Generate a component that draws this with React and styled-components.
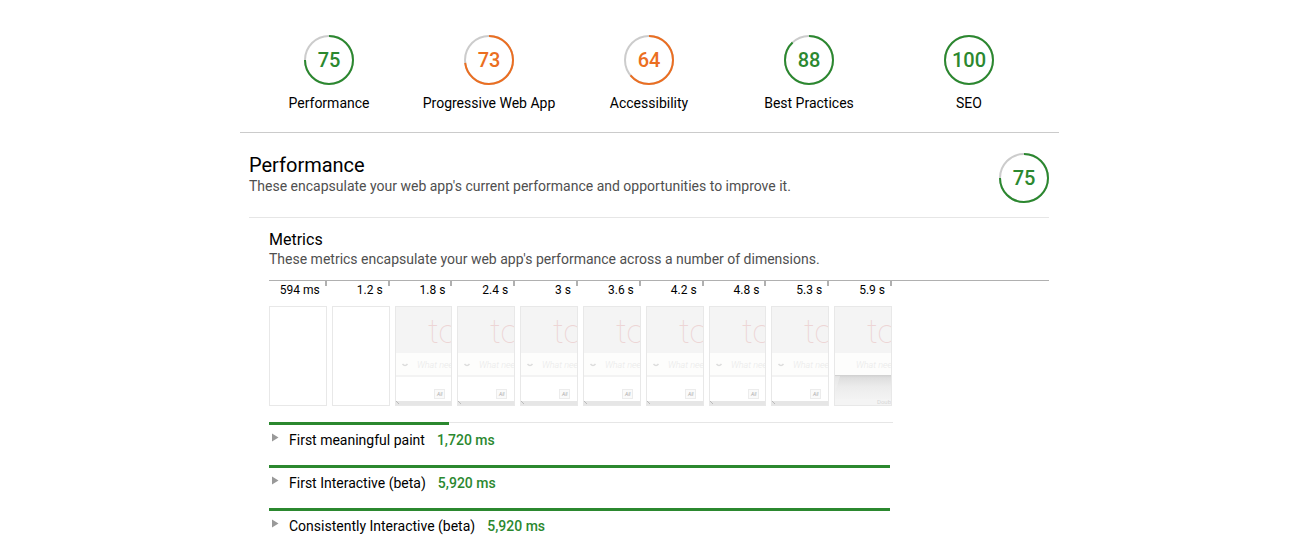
import React from "react";
import styled, { createGlobalStyle } from "styled-components";

const GREEN = "#2b882f";
const ORANGE = "#eb6e21";

const GlobalStyle = createGlobalStyle`
  body {
    margin: 0;
    background: #fff;
    color: #000;
    font-family: Roboto, "Liberation Sans", sans-serif;
    font-size: 14px;
    line-height: 18px;
  }
`;

const Report = styled.main`
  max-width: 819px;
  margin: 0 auto;
  padding-right: 3px;
`;

const Scores = styled.nav`
  display: grid;
  grid-template-columns: repeat(5, 1fr);
  padding: 35px 10px 20px 9px;
  border-bottom: 1px solid #cbcbcb;
`;

const ScoreLink = styled.a`
  display: flex;
  flex-direction: column;
  align-items: center;
  gap: 9px;
  color: inherit;
  text-decoration: none;
`;

const GaugeBox = styled.span`
  display: grid;
  flex: none;
  width: 50px;
  height: 50px;
  color: ${(p) => p.$color};
  font-size: 20px;
  font-weight: 500;
  line-height: 50px;
  text-align: center;

  > * {
    grid-area: 1 / 1;
  }
`;

const Category = styled.section`
  padding: 20px 10px 0 9px;
`;

const CategoryHeader = styled.header`
  display: flex;
  justify-content: space-between;
  padding-bottom: 14px;
  border-bottom: 1px solid #e6e6e6;
`;

const CategoryTitle = styled.h1`
  margin: 0;
  font-size: 20px;
  font-weight: 400;
  line-height: 24px;
`;

const Description = styled.p`
  margin: 0;
  color: #4f4f4f;
`;

const Metrics = styled.section`
  padding: 12px 0 0 20px;
`;

const MetricsTitle = styled.h2`
  margin: 0;
  font-size: 16px;
  font-weight: 400;
  line-height: 20px;
`;

const Filmstrip = styled.div`
  margin-top: 12px;
  border-top: 1px solid #b0b0b0;
`;

const Frames = styled.ol`
  display: grid;
  grid-template-columns: repeat(10, 1fr);
  column-gap: 5px;
  max-width: 623px;
  margin: 0;
  padding: 0;
  list-style: none;
`;

const Frame = styled.li`
  display: flex;
  flex-direction: column;
  gap: 7px;
  min-width: 0;
`;

const FrameTime = styled.span`
  display: flex;
  justify-content: flex-end;
  gap: 5px;
  font-size: 12px;
  line-height: 18px;
  white-space: nowrap;

  &::after {
    content: "";
    width: 2px;
    height: 5px;
    background: #b0b0b0;
  }
`;

const Thumb = styled.svg`
  display: block;
  box-sizing: border-box;
  width: 100%;
  height: 100px;
  border: 1px solid #e8e8e8;
`;

const MetricList = styled.div`
  display: flex;
  flex-direction: column;
  gap: 15px;
  max-width: 624px;
  margin-top: 16px;
`;

const Metric = styled.details`
  border-top: 1px solid ${(p) => (p.$full ? "transparent" : "#e6e6e6")};
`;

const Bar = styled.span`
  display: block;
  max-width: 621px;
  height: 3px;
  margin-top: -1px;
`;

const BarFill = styled.span`
  display: block;
  height: 3px;
  background: ${GREEN};
`;

const Summary = styled.summary`
  display: block;
  cursor: pointer;
`;

const MetricLine = styled.span`
  display: flex;
  padding: 6px 0 1px 3px;
`;

const Arrow = styled.svg`
  flex: none;
  width: 7px;
  height: 9px;
  margin: 2px 10px 0 0;
`;

const MetricValue = styled.span`
  margin-left: 12px;
  color: ${GREEN};
  font-weight: 500;
`;

const scores = [
  ["Performance", 75, GREEN],
  ["Progressive Web App", 73, ORANGE],
  ["Accessibility", 64, ORANGE],
  ["Best Practices", 88, GREEN],
  ["SEO", 100, GREEN],
];

const frames = [
  ["594 ms", "blank"],
  ["1.2 s", "blank"],
  ["1.8 s", "list"],
  ["2.4 s", "list"],
  ["3 s", "list"],
  ["3.6 s", "list"],
  ["4.2 s", "list"],
  ["4.8 s", "list"],
  ["5.3 s", "list"],
  ["5.9 s", "empty"],
];

const TOTAL = 5920;
const metrics = [
  ["First meaningful paint", 1720],
  ["First Interactive (beta)", 5920],
  ["Consistently Interactive (beta)", 5920],
];

function Gauge({ value, color }) {
  return (
    <GaugeBox $color={color}>
      <svg width="50" height="50" viewBox="0 0 50 50" aria-hidden="true">
        <circle cx="25" cy="25" r="24" fill="none" stroke="#ccc" strokeWidth="2" />
        <circle
          cx="25"
          cy="25"
          r="24"
          fill="none"
          stroke={color}
          strokeWidth="2"
          pathLength="100"
          strokeDasharray={`${value} 100`}
          transform="rotate(-90 25 25)"
        />
      </svg>
      <span>{value}</span>
    </GaugeBox>
  );
}

function Thumbnail({ kind, id }) {
  if (kind === "blank") return <Thumb aria-hidden="true" />;
  const shadow = `shadow-${id}`;
  return (
    <Thumb viewBox="0 0 56 98" preserveAspectRatio="xMinYMin slice" aria-hidden="true">
      <defs>
        <linearGradient id={shadow} x1="0" y1="0" x2="0" y2="1">
          <stop offset="0" stopColor="#cfcfcf" />
          <stop offset="0.12" stopColor="#dfdfdf" />
          <stop offset="0.5" stopColor="#ececec" />
          <stop offset="1" stopColor="#f3f3f3" />
        </linearGradient>
      </defs>
      <rect width="60" height="98" fill="#f4f4f4" />
      <text x="32" y="36" fontFamily="Roboto" fontWeight="100" fontSize="34" fill="#edd5d5">
        to
      </text>
      <rect y="46" width="60" height="22" fill="#fdfdfc" />
      <text x="21" y="61" fontFamily="Roboto" fontStyle="italic" fontWeight="300" fontSize="9" fill="#e9e9e9">
        What nee
      </text>
      {kind === "list" ? (
        <>
          <path d="M6.500 57q2.500 3 5 0" fill="none" stroke="#dcdcdc" strokeWidth="1.500" />
          <rect y="68" width="60" height="2" fill="#f3f3f3" />
          <rect y="70" width="60" height="24" fill="#fff" />
          <rect x="38.500" y="82.500" width="10" height="9" fill="#fafafa" stroke="#ececec" />
          <text x="41" y="89" fontFamily="Roboto" fontStyle="italic" fontSize="5" fill="#aaa">
            All
          </text>
          <rect y="94" width="60" height="4" fill="#e6e6e6" />
          <path d="M0 94l3 3" stroke="#bbb" />
        </>
      ) : (
        <>
          <rect y="68" width="60" height="24" fill={`url(#${shadow})`} />
          <path d="M0 69v18l5-18z" fill="#f1f1f1" opacity="0.5" />
          <text x="42" y="97" fontFamily="Roboto" fontSize="6" fill="#d6d6d6">
            Doub
          </text>
        </>
      )}
    </Thumb>
  );
}

export default function App() {
  return (
    <>
      <GlobalStyle />
      <Report>
        <Scores aria-label="Categories">
          {scores.map(([label, value, color]) => (
            <ScoreLink key={label} href="#performance">
              <Gauge value={value} color={color} />
              <span>{label}</span>
            </ScoreLink>
          ))}
        </Scores>
        <Category id="performance">
          <CategoryHeader>
            <div>
              <CategoryTitle>Performance</CategoryTitle>
              <Description>
                These encapsulate your web app's current performance and opportunities to improve it.
              </Description>
            </div>
            <Gauge value={75} color={GREEN} />
          </CategoryHeader>
          <Metrics>
            <MetricsTitle>Metrics</MetricsTitle>
            <Description>
              These metrics encapsulate your web app's performance across a number of dimensions.
            </Description>
            <Filmstrip>
              <Frames>
                {frames.map(([time, kind], i) => (
                  <Frame key={time}>
                    <FrameTime>{time}</FrameTime>
                    <Thumbnail kind={kind} id={i} />
                  </Frame>
                ))}
              </Frames>
            </Filmstrip>
            <MetricList>
              {metrics.map(([label, ms]) => (
                <Metric key={label} $full={ms === TOTAL}>
                  <Summary>
                    <Bar>
                      <BarFill style={{ width: `${(ms / TOTAL) * 100}%` }} />
                    </Bar>
                    <MetricLine>
                      <Arrow viewBox="0 0 7 9" aria-hidden="true">
                        <path d="M0 0.500L6.500 4.500 0 8.500z" fill="#999" />
                      </Arrow>
                      <span>{label}</span>
                      <MetricValue>{ms.toLocaleString("en-US")} ms</MetricValue>
                    </MetricLine>
                  </Summary>
                </Metric>
              ))}
            </MetricList>
          </Metrics>
        </Category>
      </Report>
    </>
  );
}
